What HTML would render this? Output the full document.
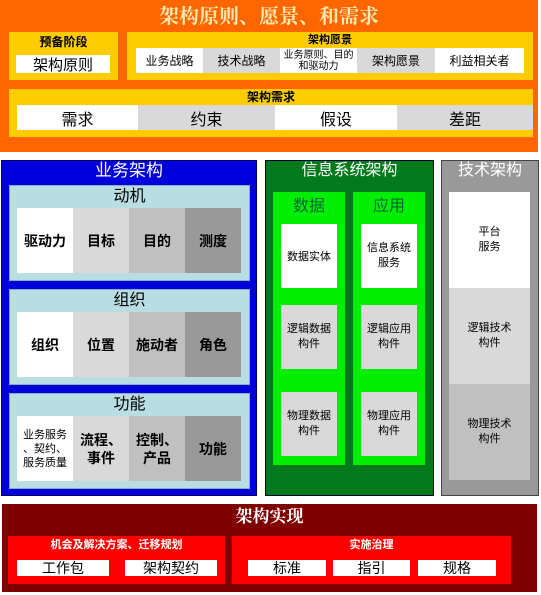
<!DOCTYPE html><html><head><meta charset="utf-8"><style>
*{margin:0;padding:0;box-sizing:border-box}
body{width:541px;height:595px;background:#fff;position:relative;overflow:hidden;font-family:"Liberation Sans","Noto Sans CJK SC",sans-serif}
div{position:absolute}
.c{display:flex;align-items:center;justify-content:center;text-align:center;color:#000}
.w{background:#fff}.g1{background:#d9d9d9}.g2{background:#c0c0c0}.g3{background:#999}
.t{color:#fff;text-align:center}
.b{font-weight:bold}
</style></head><body>
<!-- top orange -->
<div style="left:0;top:0;width:538px;height:152px;background:#ff6600"></div>
<div class="t b" style="left:0;top:3px;width:538px;font-size:20px;line-height:24px;color:#ffe9b0;font-family:'Noto Serif CJK SC',serif">架构原则、愿景、和需求</div>
<div style="left:9px;top:32px;width:109px;height:48px;background:#ffcc00"></div>
<div class="c b" style="left:9px;top:34px;width:109px;font-size:12px;line-height:16px">预备阶段</div>
<div class="c w" style="left:16px;top:55px;width:94px;height:18px;font-size:15px">架构原则</div>
<div style="left:127px;top:32px;width:406px;height:48px;background:#ffcc00"></div>
<div class="c b" style="left:127px;top:34px;width:406px;font-size:11px;line-height:13px">架构愿景</div>
<div class="c w" style="left:136px;top:48px;width:67px;height:25px;font-size:12px">业务战略</div>
<div class="c g1" style="left:203px;top:48px;width:77px;height:25px;font-size:12px">技术战略</div>
<div class="c w" style="left:280px;top:48px;width:77px;height:25px;font-size:10px;line-height:11px">业务原则、目的<br>和驱动力</div>
<div class="c g1" style="left:357px;top:48px;width:78px;height:25px;font-size:12px">架构愿景</div>
<div class="c w" style="left:435px;top:48px;width:89px;height:25px;font-size:12px">利益相关者</div>
<div style="left:9px;top:89px;width:524px;height:48px;background:#ffcc00"></div>
<div class="c b" style="left:9px;top:90px;width:524px;font-size:12px;line-height:15px">架构需求</div>
<div class="c w" style="left:17px;top:105px;width:121px;height:25px;font-size:16px">需求</div>
<div class="c g1" style="left:138px;top:105px;width:137px;height:25px;font-size:16px">约束</div>
<div class="c w" style="left:275px;top:105px;width:122px;height:25px;font-size:16px">假设</div>
<div class="c g1" style="left:397px;top:105px;width:136px;height:25px;font-size:16px">差距</div>
<!-- blue -->
<div style="left:1px;top:160px;width:256px;height:336px;background:#0000dd;border:1px solid #000060"></div>
<div class="t" style="left:1px;top:160px;width:256px;font-size:17px;line-height:22px">业务架构</div>
<div style="left:9px;top:185px;width:241px;height:96px;background:#b8dde2;border:1px solid #8ab"></div>
<div class="c" style="left:9px;top:187px;width:241px;font-size:16px;line-height:20px">动机</div>
<div class="c w b" style="left:17px;top:208px;width:56px;height:65px;font-size:14px">驱动力</div>
<div class="c g1 b" style="left:73px;top:208px;width:56px;height:65px;font-size:14px">目标</div>
<div class="c g2 b" style="left:129px;top:208px;width:56px;height:65px;font-size:14px">目的</div>
<div class="c g3 b" style="left:185px;top:208px;width:56px;height:65px;font-size:14px">测度</div>
<div style="left:9px;top:289px;width:241px;height:96px;background:#b8dde2;border:1px solid #8ab"></div>
<div class="c" style="left:9px;top:291px;width:241px;font-size:16px;line-height:20px">组织</div>
<div class="c w b" style="left:17px;top:312px;width:56px;height:65px;font-size:14px">组织</div>
<div class="c g1 b" style="left:73px;top:312px;width:56px;height:65px;font-size:14px">位置</div>
<div class="c g2 b" style="left:129px;top:312px;width:56px;height:65px;font-size:14px">施动者</div>
<div class="c g3 b" style="left:185px;top:312px;width:56px;height:65px;font-size:14px">角色</div>
<div style="left:9px;top:393px;width:241px;height:96px;background:#b8dde2;border:1px solid #8ab"></div>
<div class="c" style="left:9px;top:395px;width:241px;font-size:16px;line-height:20px">功能</div>
<div class="c w" style="left:17px;top:416px;width:56px;height:65px;font-size:11px;line-height:14px">业务服务<br>、契约、<br>服务质量</div>
<div class="c g1 b" style="left:73px;top:416px;width:56px;height:65px;font-size:14px;line-height:18px">流程、<br>事件</div>
<div class="c g2 b" style="left:129px;top:416px;width:56px;height:65px;font-size:14px;line-height:18px">控制、<br>产品</div>
<div class="c g3 b" style="left:185px;top:416px;width:56px;height:65px;font-size:14px">功能</div>
<!-- green -->
<div style="left:265px;top:160px;width:169px;height:336px;background:#007a1a;border:1px solid #003"></div>
<div class="t" style="left:265px;top:160px;width:169px;font-size:16px;line-height:22px">信息系统架构</div>
<div style="left:273px;top:192px;width:72px;height:273px;background:#00ee00"></div>
<div style="left:353px;top:192px;width:72px;height:273px;background:#00ee00"></div>
<div class="c" style="left:273px;top:196px;width:72px;font-size:16px;line-height:22px;color:#063">数据</div>
<div class="c" style="left:353px;top:196px;width:72px;font-size:16px;line-height:22px;color:#063">应用</div>
<div class="c w" style="left:281px;top:224px;width:56px;height:64px;font-size:11px">数据实体</div>
<div class="c g1" style="left:281px;top:305px;width:56px;height:64px;font-size:11px;line-height:15px">逻辑数据<br>构件</div>
<div class="c g1" style="left:281px;top:392px;width:56px;height:64px;font-size:11px;line-height:15px">物理数据<br>构件</div>
<div class="c w" style="left:361px;top:224px;width:56px;height:64px;font-size:11px;line-height:15px">信息系统<br>服务</div>
<div class="c g1" style="left:361px;top:305px;width:56px;height:64px;font-size:11px;line-height:15px">逻辑应用<br>构件</div>
<div class="c g1" style="left:361px;top:392px;width:56px;height:64px;font-size:11px;line-height:15px">物理应用<br>构件</div>
<!-- gray -->
<div style="left:441px;top:160px;width:98px;height:336px;background:#999;border:1px solid #444"></div>
<div class="t" style="left:441px;top:160px;width:98px;font-size:16px;line-height:22px">技术架构</div>
<div class="c w" style="left:449px;top:192px;width:81px;height:96px;font-size:11px;line-height:15px">平台<br>服务</div>
<div class="c g1" style="left:449px;top:288px;width:81px;height:96px;font-size:11px;line-height:15px">逻辑技术<br>构件</div>
<div class="c g2" style="left:449px;top:384px;width:81px;height:96px;font-size:11px;line-height:15px">物理技术<br>构件</div>
<!-- bottom -->
<div style="left:2px;top:504px;width:535px;height:88px;background:#800000"></div>
<div class="t b" style="left:2px;top:504px;width:535px;font-size:17px;line-height:22px;font-family:'Noto Serif CJK SC',serif">架构实现</div>
<div style="left:8px;top:536px;width:217px;height:48px;background:#ff0000"></div>
<div class="t b" style="left:8px;top:538px;width:217px;font-size:11px;line-height:15px">机会及解决方案、迁移规划</div>
<div class="c w" style="left:17px;top:560px;width:92px;height:16px;font-size:14px">工作包</div>
<div class="c w" style="left:125px;top:560px;width:92px;height:16px;font-size:14px">架构契约</div>
<div style="left:232px;top:536px;width:279px;height:48px;background:#ff0000"></div>
<div class="t b" style="left:232px;top:538px;width:279px;font-size:11px;line-height:15px">实施治理</div>
<div class="c w" style="left:248px;top:560px;width:78px;height:16px;font-size:14px">标准</div>
<div class="c w" style="left:333px;top:560px;width:77px;height:16px;font-size:14px">指引</div>
<div class="c w" style="left:418px;top:560px;width:78px;height:16px;font-size:14px">规格</div>
</body></html>
